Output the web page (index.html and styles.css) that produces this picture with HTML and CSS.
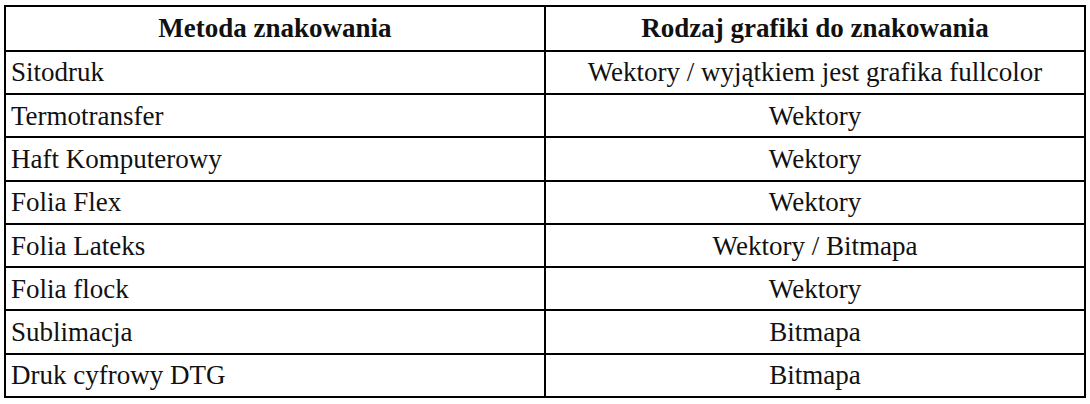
FILE: index.html
```html
<!DOCTYPE html>
<html lang="pl">
<head>
<meta charset="utf-8">
<link rel="stylesheet" href="styles.css">
</head>
<body>
<table class="tbl">
  <thead>
    <tr><th>Metoda znakowania</th><th>Rodzaj grafiki do znakowania</th></tr>
  </thead>
  <tbody>
    <tr><td>Sitodruk</td><td>Wektory / wyjątkiem jest grafika fullcolor</td></tr>
    <tr><td>Termotransfer</td><td>Wektory</td></tr>
    <tr><td>Haft Komputerowy</td><td>Wektory</td></tr>
    <tr><td>Folia Flex</td><td>Wektory</td></tr>
    <tr><td>Folia Lateks</td><td>Wektory / Bitmapa</td></tr>
    <tr><td>Folia flock</td><td>Wektory</td></tr>
    <tr><td>Sublimacja</td><td>Bitmapa</td></tr>
    <tr><td>Druk cyfrowy DTG</td><td>Bitmapa</td></tr>
  </tbody>
</table>
</body>
</html>
```
FILE: styles.css
```css
html, body {
  margin: 0;
  padding: 0;
  background: #fff;
}
body {
  padding: 5px 0 0 4px;
  font-family: "Liberation Serif", "Times New Roman", serif;
  color: #111;
}
.tbl {
  border-collapse: collapse;
  width: 1082px;
  table-layout: fixed;
}
.tbl th, .tbl td {
  border: 2px solid #000;
  height: 41.3px;
  padding: 0 5px;
  font-size: 27px;
  line-height: 30px;
  vertical-align: middle;
}
.tbl th {
  font-weight: bold;
  text-align: center;
  height: 42.7px;
}
.tbl td:first-child {
  text-align: left;
}
.tbl td:last-child {
  text-align: center;
}
.tbl th:first-child, .tbl td:first-child {
  width: 528px;
}
```
